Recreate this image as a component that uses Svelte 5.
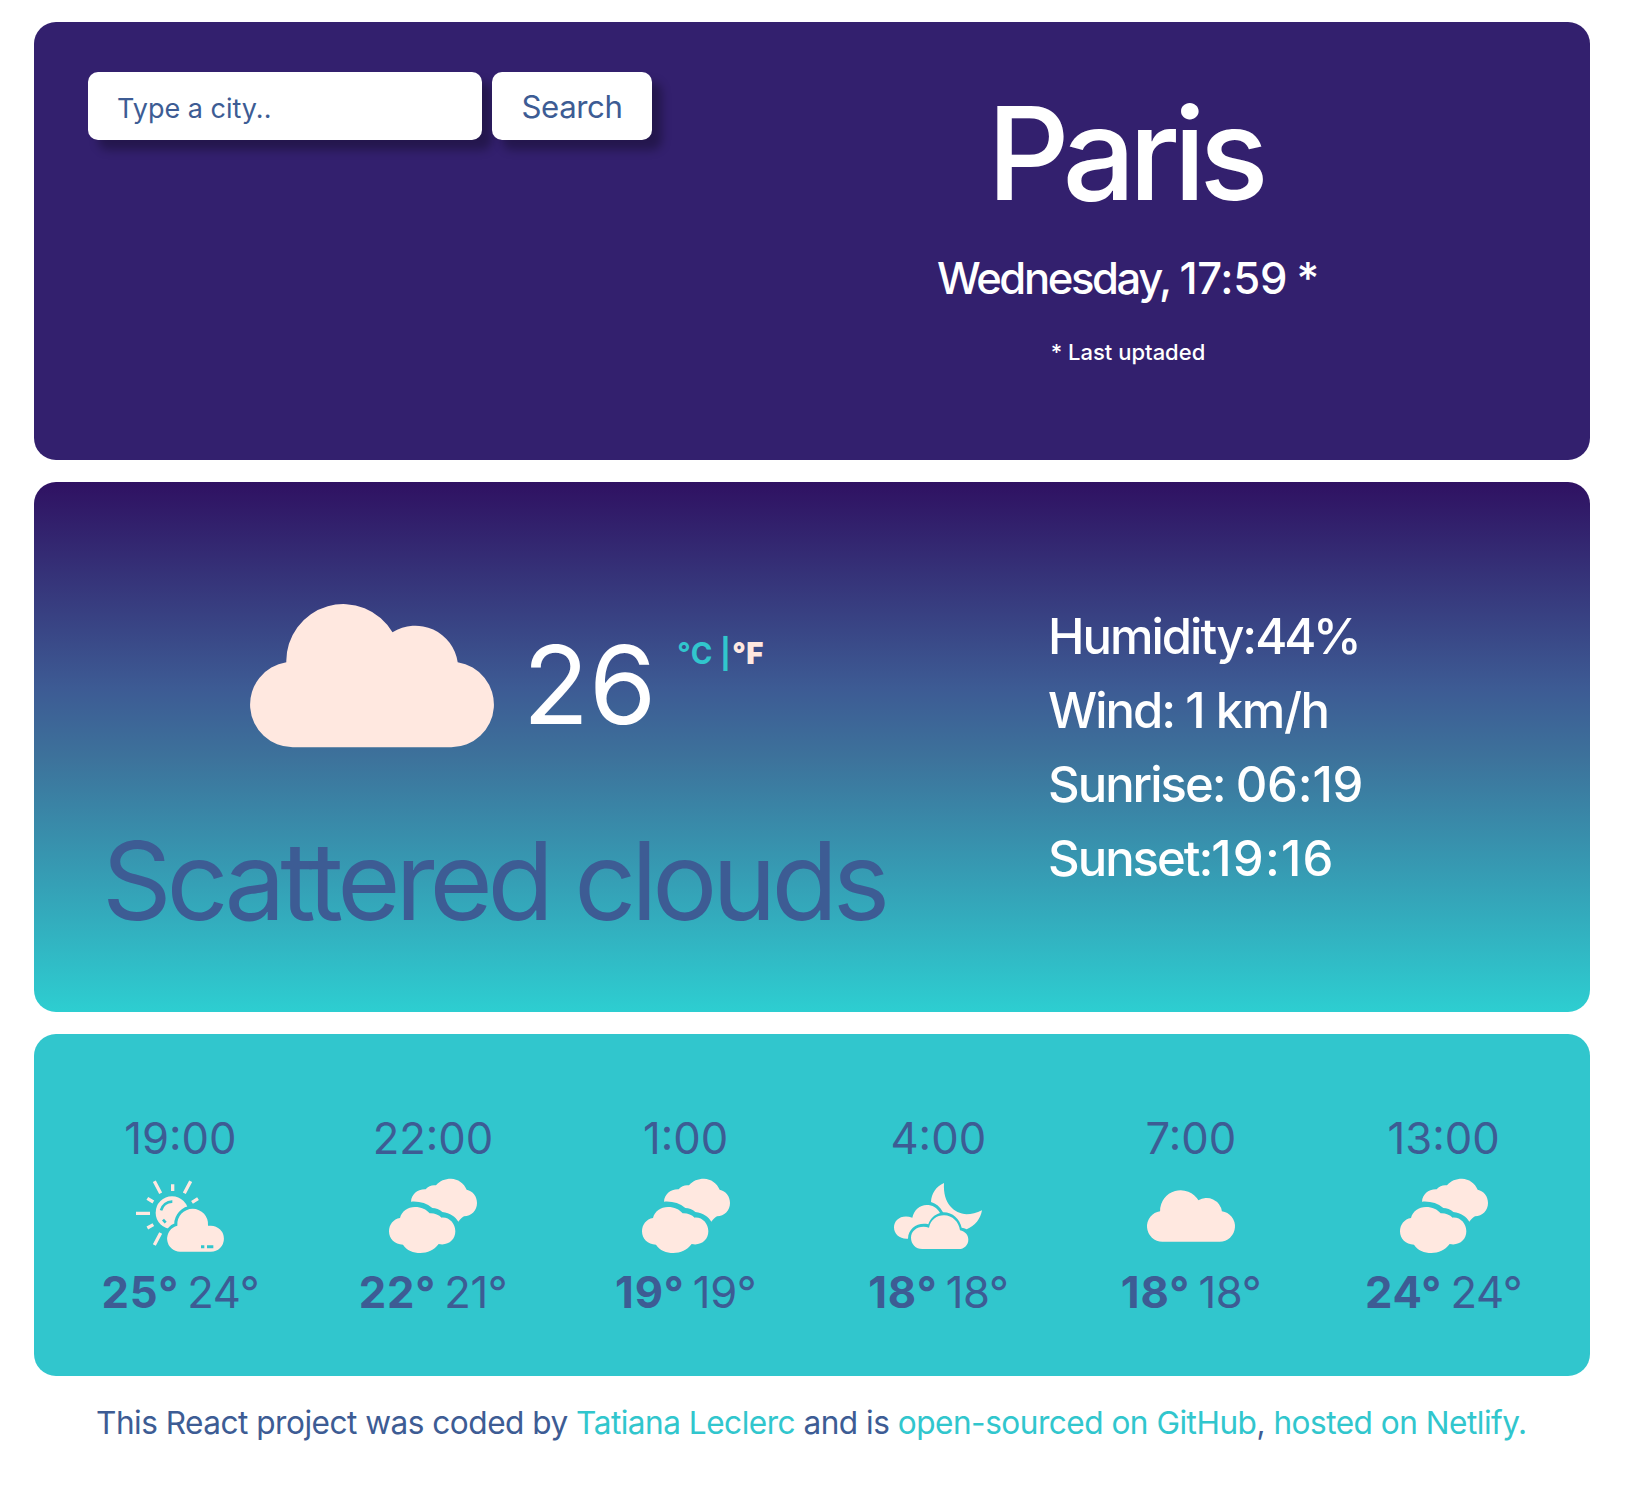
<script>
  const details = [
    { label: 'Humidity:', value: '44%' },
    { label: 'Wind: ', value: '1 km/h' },
    { label: 'Sunrise: ', value: '06:19' },
    { label: 'Sunset:', value: '19:16' }
  ];

  const forecast = [
    { time: '19:00', icon: 'sunCloud', max: 25, min: 24 },
    { time: '22:00', icon: 'clouds', max: 22, min: 21 },
    { time: '1:00', icon: 'clouds', max: 19, min: 19 },
    { time: '4:00', icon: 'moonCloud', max: 18, min: 18 },
    { time: '7:00', icon: 'cloud', max: 18, min: 18 },
    { time: '13:00', icon: 'clouds', max: 24, min: 24 }
  ];
</script>

{#snippet cloudShape()}
  <path d="M42.7 143.3A42.75 42.75 0 0 1 36.3 58.3A57 57 0 0 1 142.5 28.3A42.8 42.8 0 0 1 207.7 58.3A42.75 42.75 0 0 1 201.3 143.3Z" />
{/snippet}

{#snippet weatherIcon(name)}
  {#if name === 'cloud'}
    <svg class="icon" viewBox="0 -50.3 244 244">{@render cloudShape()}</svg>
  {:else if name === 'clouds'}
    <svg class="icon" viewBox="0 0 264 264">
      <path d="M66 89C67 68 85 51 110 52C118 42 130 38 141 40C152 26 168 20 186 20C207 21 225 33 233 53C252 57 264 73 264 93C264 115 247 133 225 133C219 137 213 142 208 149C200 135 184 123 160 120C152 112 140 108 130 108C112 93 90 87 66 89Z" />
      <path d="M33 138C38 118 56 105 78 105C97 105 112 112 122 124C135 123 149 128 158 137C181 135 199 155 199 178C199 204 177 222 149 216C136 234 115 243 94 243C73 243 53 235 42 218C17 218 0 200 0 178C0 158 13 141 33 138Z" />
    </svg>
  {:else if name === 'moonCloud'}
    <svg class="icon" viewBox="0 0 264 264">
      <path d="M150 33C126 43 112 66 111 90C126 94 138 104 147 121C175 120 197 140 203 167Q210 168 218 172C243 162 260 140 264 115C248 123 232 127 218 127C180 124 146 95 150 33Z" />
      <path d="M55 137C60 114 77 99 98 99C115 99 129 107 138 123C121 128 108 140 103 157C72 150 43 168 42 200C18 202 0 187 0 166C0 144 22 126 55 137Z" />
      <path d="M85 231C65 231 51 216 51 197C51 175 75 158 105 167C110 143 128 130 150 130C175 130 195 150 198 175C213 178 223 189 223 203C223 219 210 231 195 231Z" />
    </svg>
  {:else}
    <svg class="icon" viewBox="0 0 264 264">
      <defs>
        <mask id="behind-cloud">
          <rect width="264" height="264" fill="white" />
          <path d="M132 239.500A39.800 39.800 0 0 1 124 161A46.200 46.200 0 1 1 216 161H224.500A39.250 39.250 0 0 1 224.500 239.500Z" fill="black" stroke="black" stroke-width="18" />
          <path d="M75 115A34 34 0 0 1 109 89M81 143L89 152" fill="none" stroke="black" stroke-width="8" />
        </mask>
      </defs>
      <path class="rays" d="M55 28L74 64M110 37V57M164 28L145 64M34 79L52 90M168 91L186 80M0 124H42M34 168L52 158M55 219L74 183" />
      <circle cx="108" cy="122" r="49" mask="url(#behind-cloud)" />
      <path fill-rule="evenodd" d="M132 239.500A39.800 39.800 0 0 1 124 161A46.200 46.200 0 1 1 216 161H224.500A39.250 39.250 0 0 1 224.500 239.500ZM195 220V229H205V220ZM213 220V229H232V220Z" />
    </svg>
  {/if}
{/snippet}

<main>
  <header class="card top">
    <form onsubmit={(e) => e.preventDefault()}>
      <input type="text" placeholder="Type a city.." aria-label="City" />
      <button type="submit">Search</button>
    </form>
    <div class="place">
      <h1>Paris</h1>
      <p class="date"><span class="day">Wednesday,</span> 17:59 *</p>
      <p class="note">* Last uptaded</p>
    </div>
  </header>

  <section class="card current">
    <div class="summary">
      <div class="now">
        <svg class="big-cloud" viewBox="0 0 244 143.3">{@render cloudShape()}</svg>
        <span class="temp">26</span>
        <span class="units">°C |<b>°F</b></span>
      </div>
      <h2>Scattered clouds</h2>
    </div>
    <ul>
      {#each details as d}
        <li><span class="label">{d.label}</span><span class="value">{d.value}</span></li>
      {/each}
    </ul>
  </section>

  <section class="card forecast">
    {#each forecast as f}
      <div class="slot">
        <div class="time">{f.time}</div>
        {@render weatherIcon(f.icon)}
        <div class="range"><strong>{f.max}°</strong> <span>{f.min}°</span></div>
      </div>
    {/each}
  </section>

  <footer>This React project was coded by <a href="#author">Tatiana Leclerc</a> and is <a href="#source">open-sourced on GitHub</a>, <a href="#host">hosted on Netlify.</a></footer>
</main>

<style>
  :global(body) {
    margin: 0;
    background: #fff;
  }

  main {
    display: flex;
    flex-direction: column;
    width: 1556px;
    padding: 22px 0 0 34px;
    font-family: Inter, 'Liberation Sans', sans-serif;
    color: #3d5c94;
  }

  h1, h2, p, ul {
    margin: 0;
    padding: 0;
    font-weight: 400;
  }

  svg {
    display: block;
    overflow: visible;
    fill: #ffe8e0;
  }

  .card {
    box-sizing: border-box;
    margin-bottom: 22px;
    border-radius: 22px;
  }

  .top {
    display: grid;
    grid-template-columns: 724px 632px;
    height: 438px;
    padding: 50px 54px;
    background: #33206e;
    color: #fff;
  }

  form {
    display: flex;
    align-items: flex-start;
    gap: 10px;
  }

  input, button {
    box-sizing: border-box;
    height: 68px;
    border: 0;
    border-radius: 10px;
    background: #fff;
    box-shadow: 10px 10px 10px rgba(0, 0, 0, 0.3);
    font-family: inherit;
    color: #3d5c94;
  }

  input {
    width: 394px;
    padding: 4px 29px 0;
    font-size: 27px;
  }

  input::placeholder {
    color: #3d5c94;
    opacity: 1;
  }

  button {
    width: 160px;
    padding: 1px 0 0;
    font-size: 31.2px;
    letter-spacing: -0.4px;
  }

  .place {
    padding-top: 3px;
    text-align: center;
  }

  h1 {
    margin-left: -7px;
    font-size: 129px;
    font-weight: 500;
    line-height: 156px;
    letter-spacing: -6.8px;
  }

  .date {
    margin-top: 22px;
    font-size: 43.6px;
    font-weight: 450;
    line-height: 52px;
    letter-spacing: -0.3px;
    word-spacing: -1.8px;
  }

  .day {
    letter-spacing: -2.4px;
  }

  .note {
    margin-top: 34px;
    font-size: 22px;
    font-weight: 500;
    line-height: 26px;
  }

  .current {
    display: flex;
    height: 530px;
    padding: 122px 68px 0;
    background: linear-gradient(#2f1162, #3d5b94 39%, #3d729b 52%, #2dced1);
  }

  .summary {
    width: 946px;
  }

  .now {
    display: flex;
    align-items: flex-start;
    height: 146px;
    padding-left: 148px;
  }

  .big-cloud {
    width: 244px;
    height: 143.3px;
  }

  .temp {
    margin: 15.5px 0 0 28.7px;
    font-size: 108.6px;
    line-height: 130px;
    color: #fff;
  }

  .units {
    margin: 32.3px 0 0 21px;
    font-size: 29.3px;
    font-weight: 700;
    line-height: 36px;
    letter-spacing: 0.4px;
    color: #31c6cd;
  }

  .units b {
    margin-left: 1px;
    color: #ffe8e0;
  }

  h2 {
    margin-top: 65.5px;
    font-size: 108.6px;
    line-height: 130px;
    letter-spacing: -5.15px;
    white-space: nowrap;
  }

  ul {
    margin-top: -4px;
    list-style: none;
    font-size: 49px;
    font-weight: 450;
    line-height: 74px;
    white-space: pre;
    color: #fff;
  }

  .label {
    letter-spacing: -2px;
  }

  .value {
    letter-spacing: -0.2px;
  }

  li:nth-child(1) .value {
    letter-spacing: -3.2px;
  }

  li:nth-child(2) .value {
    letter-spacing: -1.4px;
  }

  li:nth-child(4) .value {
    letter-spacing: 1.2px;
  }

  .forecast {
    display: grid;
    grid-template-columns: repeat(6, 1fr);
    height: 342px;
    padding: 79px 20px 0;
    background: #31c6cd;
    font-size: 43.6px;
    line-height: 52px;
    text-align: center;
  }

  .icon {
    width: 88px;
    height: 88px;
    margin: 7px auto;
  }

  .rays {
    fill: none;
    stroke: #ffe8e0;
    stroke-width: 10;
  }

  .range {
    word-spacing: -4px;
  }

  strong {
    font-weight: 700;
    letter-spacing: 0.8px;
  }

  .range span {
    letter-spacing: -0.4px;
  }

  footer {
    margin: 4.5px 0 0 62px;
    font-size: 31.6px;
    line-height: 40px;
    letter-spacing: -0.51px;
    white-space: nowrap;
  }

  a {
    color: #31c6cd;
    text-decoration: none;
  }
</style>
